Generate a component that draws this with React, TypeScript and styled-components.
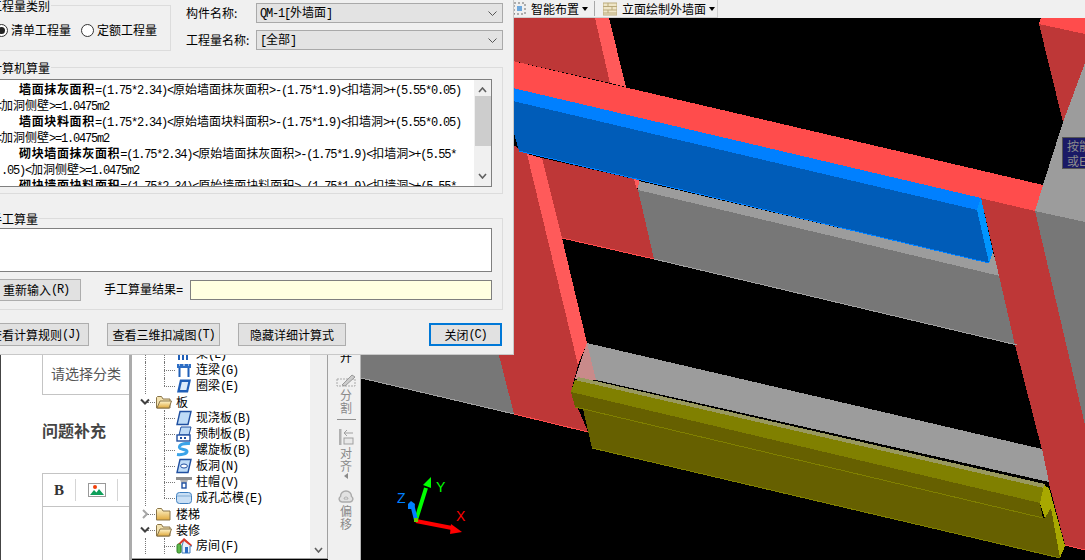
import React from "react";
import styled, { createGlobalStyle } from "styled-components";

const GlobalStyle = createGlobalStyle`
  html, body { margin: 0; padding: 0; background: #000; }
  body { font-family: "Noto Sans CJK SC", "Liberation Sans", sans-serif; font-size: 12px; color: #000; }
  * { box-sizing: border-box; }
`;

// ascii runs get a narrow mono face so they keep the half-width look of the original
const Latin = styled.span`
  font-family: "Liberation Mono", monospace;
  font-size: 12px;
  letter-spacing: -1.2px;
  font-weight: normal;
`;
const Mixed = ({ text }: { text: string }) => (
  <>
    {text.split(/([\x20-\x7e]+)/).map((part, i) =>
      i % 2 ? <Latin key={i}>{part}</Latin> : part
    )}
  </>
);

/* ---------- 3d scene ---------- */
const FACES: { c: string; p: string }[] = [
  { c: "#777777", p: "361,300 495,300 514,414 361,378" },
  { c: "#BE3737", p: "500,18 595,18 610,83 500,58" },
  { c: "#FF5A5A", p: "595,18 609,18 626,87 610,83" },
  { c: "#BE3737", p: "480,125 528,154 578,365 571,392 588,432 514,414 495,340" },
  { c: "#FF5A5A", p: "527,154 542,158 562,238 587,343 578,365" },
  { c: "#BE3737", p: "542,158 634,179 638,190 654,259 562,238" },
  { c: "#FF5A5A", p: "634,179 640,181 637,190" },
  { c: "#9C9C9C", p: "639,181 989,263 993,252 1000,276 638,190" },
  { c: "#777777", p: "638,190 1000,276 1017,345 654,259" },
  { c: "#777777", p: "1035,211 1085,222 1085,425" },
  { c: "#BE3737", p: "981,198 1035,211 1085,425 1085,550 1065,545 1048,480 1042,450 1015,345" },
  { c: "#9C9C9C", p: "1085,63 1085,222 1035,211 1043,185 1063,122" },
  { c: "#BE3737", p: "1039,24 1085,34 1085,63 1063,122" },
  { c: "#FF4C4C", p: "1041,18 1085,18 1085,34 1039,24" },
  { c: "#FF4C4C", p: "500,58 1043,185 1035,211 500,85" },
  { c: "#0080FF", p: "500,85 981,198 977,210 500,98" },
  { c: "#005CB8", p: "500,98 977,210 989,263 519,151 513,130" },
  { c: "#0095FF", p: "981,198 993,252 989,263 977,210" },
  { c: "#9C9C9C", p: "587,343 1042,449 1049,482 596,380" },
  { c: "#C98A8A", p: "587,343 596,380 575,379" },
  { c: "#99995E", p: "578,377 1045,484 1044,489 576,381" },
  { c: "#808000", p: "575,380 1044,488 1040,503 571,392" },
  { c: "#666000", p: "571,392 1040,503 1043,518 575,407" },
  { c: "#666000", p: "583,409 1045,518 1051,505 1060,558 592,448" },
  { c: "#A8A800", p: "1049,488 1065,546 1060,558 1051,508 1045,518 1040,503 1044,485" },
];

const EDGES: { c: string; d: string }[] = [
  { c: "#0080FF", d: "M519 151L989 263" },
  { c: "#A0A0A0", d: "M361 378L514 414" },
  { c: "#FF4C4C", d: "M514 414L588 432" },
  { c: "#FF4C4C", d: "M562 238L654 259" },
  { c: "#A0A0A0", d: "M654 259L1017 345" },
  { c: "#FF4C4C", d: "M1065 545L1085 550" },
  { c: "#808000", d: "M575 407L1043 518" },
  { c: "#808000", d: "M592 448L1060 558" },
];

const AxisLetter = styled.text`
  font-family: "Liberation Sans", sans-serif;
  font-size: 14px;
  font-weight: 400;
`;

const Scene = () => (
  <svg width="724" height="542" viewBox="361 18 724 542" style={{ display: "block" }}>
    <rect x="361" y="18" width="724" height="542" fill="#000" />
    <g shapeRendering="crispEdges">
      {FACES.map((f, i) => (
        <polygon key={i} points={f.p} fill={f.c} />
      ))}
      {EDGES.map((e, i) => (
        <path key={i} d={e.d} stroke={e.c} strokeWidth="1" fill="none" />
      ))}
    </g>
    {/* axes */}
    <path d="M416 520L426 488" stroke="#00FF00" strokeWidth="4" />
    <polygon points="431,477 431,488 423,485" fill="#00FF00" />
    <path d="M416 520L412 504" stroke="#0080FF" strokeWidth="4" />
    <polygon points="411,501 415,504 414,509 408,509 408,504" fill="#0080FF" />
    <path d="M416 521L452 528" stroke="#FF0000" strokeWidth="4" />
    <polygon points="462,532 451,524 450,534" fill="#FF0000" />
    <rect x="414" y="518" width="4" height="4" fill="#66CC00" />
    <AxisLetter x="397" y="503" fill="#0080FF">Z</AxisLetter>
    <AxisLetter x="436" y="492" fill="#00FF00">Y</AxisLetter>
    <AxisLetter x="456" y="521" fill="#FF0000">X</AxisLetter>
  </svg>
);

/* ---------- small drawings ---------- */
const Chevron = ({ open }: { open: boolean }) =>
  open ? (
    <svg width="10" height="8" viewBox="0 0 10 8">
      <path d="M1 1.5L5 5.5L9 1.5" fill="none" stroke="#404040" strokeWidth="2" />
    </svg>
  ) : (
    <svg width="8" height="10" viewBox="0 0 8 10">
      <path d="M2 1L6 5L2 9" fill="none" stroke="#A6A6A6" strokeWidth="2" />
    </svg>
  );

const Folder = ({ open }: { open: boolean }) => (
  <svg width="16" height="14" viewBox="0 0 16 14">
    <defs>
      <linearGradient id="fold" x1="0" y1="0" x2="0" y2="1">
        <stop offset="0" stopColor="#FFF6CF" />
        <stop offset="1" stopColor="#E0A93C" />
      </linearGradient>
    </defs>
    <path d="M0.5 2.5V13H14V4H7L5.5 1.5H1.5Z" fill={open ? "#F4E3B0" : "url(#fold)"} stroke="#8A7548" />
    {open ? <path d="M1 13L4 6H15.5L13 13Z" fill="url(#fold)" stroke="#8A7548" /> : null}
  </svg>
);

const LEAF: Record<string, React.ReactNode> = {
  beam: <path d="M3 1V14M7 1V14M11 1V14" stroke="#1F5FB8" strokeWidth="2" fill="none" />,
  link: (
    <>
      <rect x="1" y="2" width="14" height="4" fill="#2B6CC4" />
      <path d="M3 3H4M7 3H9M12 3H13" stroke="#fff" />
      <path d="M3.5 6V15M12.5 6V15" stroke="#1F5FB8" strokeWidth="2" />
    </>
  ),
  ring: (
    <>
      <path d="M4 1.5H15L12 14.5H1Z" fill="#1F5FB8" />
      <path d="M5.8 4H12.2L10.4 12H4Z" fill="#DCEBFA" />
    </>
  ),
  slab: <path d="M4 1.5H15L12 14.5H1Z" fill="#BFDCF7" stroke="#1F4FA0" strokeWidth="1.4" />,
  precast: (
    <>
      <path d="M5 1H15L13 9H3Z" fill="#BFDCF7" stroke="#1F4FA0" />
      <rect x="1" y="9" width="13" height="6" fill="#fff" stroke="#1F4FA0" strokeWidth="1.4" />
      <path d="M4 11H6V13H4ZM8 11H10V13H8Z" fill="#1F4FA0" />
    </>
  ),
  spiral: (
    <path
      d="M14 1.5C8 1 3 2.5 3.5 5.5C4 8 11 7 11 9.5C11 12 5 13 1 12.5"
      fill="none"
      stroke="#3AA3E8"
      strokeWidth="3"
    />
  ),
  hole: (
    <>
      <path d="M4 1.5H15L12 14.5H1Z" fill="#BFDCF7" stroke="#1F4FA0" strokeWidth="1.4" />
      <ellipse cx="8" cy="8" rx="3.4" ry="2" fill="#fff" stroke="#1F4FA0" />
    </>
  ),
  cap: (
    <>
      <rect x="0" y="3" width="16" height="3" fill="#8E8E8E" />
      <path d="M4 6H12L10.5 9H5.5Z" fill="#B5B5B5" />
      <rect x="6" y="9" width="4" height="5" fill="#fff" stroke="#1F4FA0" strokeWidth="1.4" />
    </>
  ),
  core: (
    <>
      <rect x="0.5" y="2.5" width="15" height="11" rx="3" fill="#C8DFF5" stroke="#3F7FBF" />
      <path d="M1 6H15" stroke="#7FA9D1" />
    </>
  ),
  room: (
    <>
      <path d="M8 1L16 8H14V15H6V8Z" fill="#E9F2FB" stroke="#3F7FBF" />
      <path d="M8 0L16 7L14.5 8L8 3L3.5 7L2 6Z" fill="#D93A2B" />
      <rect x="9" y="9" width="3" height="6" fill="#2B6CC4" />
      <rect x="1" y="6" width="4" height="9" rx="1.5" fill="#5DB84A" stroke="#2F7F25" />
    </>
  ),
};

const LeafIcon = ({ kind }: { kind: string }) => (
  <svg width="16" height="16" viewBox="0 0 16 16">
    {LEAF[kind]}
  </svg>
);

/* ---------- back page, left column ---------- */
const Page = styled.div`
  position: relative;
  width: 1085px;
  height: 560px;
  overflow: hidden;
  display: flex;
  flex-direction: column;
  background: #000;
`;

const TopBar = styled.div`
  flex: 0 0 18px;
  background: #f0f0f0;
  padding-left: 513px;
`;

const TopTools = styled.div`
  width: 205px;
  height: 18px;
  display: flex;
  align-items: center;
  border-right: 1px solid #cfcfcf;
  border-bottom: 1px solid #cfcfcf;
  line-height: 16px;
`;

const TopLabel = styled.span`
  margin-left: 5px;
  white-space: nowrap;
`;

const Caret = styled.i`
  width: 0;
  height: 0;
  margin-left: 3px;
  border: 3px solid transparent;
  border-top: 4px solid #000;
  border-bottom: 0;
`;

const TopSep = styled.i`
  width: 1px;
  height: 15px;
  background: #a8a8a8;
  margin: 0 8px 0 6px;
`;

const Workspace = styled.div`
  flex: 1;
  display: flex;
  min-height: 0;
`;

const WebColumn = styled.div`
  flex: 0 0 132px;
  background: #fff;
  border-left: 1px solid #444;
  border-right: 3px solid #ababab;
  padding: 337px 0 0 41px;
  color: #555;
`;

const CategoryBox = styled.div`
  height: 40px;
  border-left: 1px solid #c4c4c4;
  border-bottom: 1px solid #c4c4c4;
  padding: 8px 0 0 8px;
  font-size: 14px;
  line-height: 20px;
  white-space: nowrap;
`;

const SectionTitle = styled.div`
  margin: 24px 0 32px;
  font-size: 16px;
  font-weight: 700;
  line-height: 22px;
  color: #444;
  white-space: nowrap;
`;

const Editor = styled.div`
  height: 90px;
  border-left: 1px solid #c4c4c4;
  border-top: 1px solid #c4c4c4;
`;

const EditorTools = styled.div`
  height: 33px;
  display: flex;
  align-items: center;
  border-bottom: 1px solid #c4c4c4;
`;

const BoldButton = styled.span`
  width: 32px;
  text-align: center;
  font-family: "Liberation Serif", serif;
  font-size: 15px;
  font-weight: 700;
  color: #333;
`;

const ToolSep = styled.i`
  width: 1px;
  height: 22px;
  background: #d5d5d5;
`;

const PictureSlot = styled.span`
  width: 41px;
  display: flex;
  justify-content: center;
`;

/* ---------- tree ---------- */
const TreePanel = styled.div`
  flex: 0 0 196px;
  height: 541px;
  display: flex;
  background: #fff;
  border-right: 1px solid #a0a0a0;
  border-bottom: 1px solid #a0a0a0;
`;

const TreeList = styled.div`
  flex: 1;
  padding-top: 328px;
  overflow: hidden;
`;

const TreeRow = styled.div<{ $leaf: boolean; $last?: boolean }>`
  position: relative;
  height: 16px;
  display: flex;
  align-items: center;
  padding-left: ${(p) => (p.$leaf ? 44 : 24)}px;
  line-height: 16px;
  white-space: nowrap;
  &::before {
    content: "";
    position: absolute;
    left: ${(p) => (p.$leaf ? 32 : 15)}px;
    top: 8px;
    width: ${(p) => (p.$leaf ? 11 : 8)}px;
    border-top: 1px dotted #777;
  }
  &::after {
    content: "";
    position: absolute;
    left: ${(p) => (p.$leaf ? 32 : 13)}px;
    top: 0;
    height: ${(p) => (p.$last ? 8 : 16)}px;
    border-left: ${(p) => (p.$leaf ? "1px dotted #777" : "none")};
  }
`;

const RailLine = styled.i`
  position: absolute;
  left: 13px;
  top: 0;
  height: 16px;
  border-left: 1px dotted #777;
`;

const Toggle = styled.span`
  position: absolute;
  left: 8px;
  top: 4px;
  width: 10px;
  height: 8px;
  display: flex;
  align-items: center;
  justify-content: center;
`;

const RowLabel = styled.span`
  margin-left: 4px;
`;

const TreeScroll = styled.div`
  flex: 0 0 17px;
  background: #f0f0f0;
  display: flex;
  align-items: flex-end;
  justify-content: center;
  padding-bottom: 5px;
`;

type Row = { label: string; kind?: string; open?: boolean; last?: boolean };

const ROWS: Row[] = [
  { label: "梁(L)", kind: "beam" },
  { label: "连梁(G)", kind: "link" },
  { label: "圈梁(E)", kind: "ring", last: true },
  { label: "板", open: true },
  { label: "现浇板(B)", kind: "slab" },
  { label: "预制板(B)", kind: "precast" },
  { label: "螺旋板(B)", kind: "spiral" },
  { label: "板洞(N)", kind: "hole" },
  { label: "柱帽(V)", kind: "cap" },
  { label: "成孔芯模(E)", kind: "core", last: true },
  { label: "楼梯", open: false },
  { label: "装修", open: true },
  { label: "房间(F)", kind: "room" },
];

/* ---------- vertical tool bar ---------- */
const VBar = styled.div`
  flex: 0 0 33px;
  background: #f0f0f0;
  border-right: 1px solid #b4b4b4;
  display: flex;
  flex-direction: column;
  align-items: center;
  padding: 333px 0 0 4px;
`;

const VLabel = styled.div<{ $active?: boolean }>`
  writing-mode: vertical-rl;
  font-size: 12px;
  line-height: 13px;
  letter-spacing: 1px;
  margin-top: ${(p) => (p.$active ? 0 : 1)}px;
  color: ${(p) => (p.$active ? "#000" : "#8a8a8a")};
`;

const VIcon = styled.svg`
  display: block;
  margin-top: 9px;
`;

const VSep = styled.i`
  width: 19px;
  border-top: 1px solid #909090;
  margin: 4px 0 -1px;
`;

const VArrow = styled.i`
  width: 0;
  height: 0;
  border: 3px solid transparent;
  border-right: 4px solid #8a8a8a;
  border-left: 0;
`;

/* ---------- viewport ---------- */
const Viewport = styled.div`
  flex: 1;
  position: relative;
  overflow: hidden;
`;

const HintBox = styled.div`
  position: absolute;
  left: 701px;
  top: 119px;
  width: 30px;
  height: 32px;
  padding: 0 0 0 4px;
  background: #1a1a66;
  border: 1px solid #555;
  color: #8c8c8c;
  font-size: 12px;
  line-height: 15px;
  white-space: nowrap;
  overflow: hidden;
`;

/* ---------- dialog ---------- */
const Dialog = styled.div`
  position: absolute;
  left: -30px;
  top: 0;
  width: 544px;
  height: 355px;
  padding: 0 10px;
  background: #f0f0f0;
  border-right: 1px solid #c8c8c8;
  border-bottom: 1px solid #c8c8c8;
  line-height: 16px;
`;

const HeadRow = styled.div`
  display: flex;
  height: 51px;
`;

const Group = styled.section<{ $h: number; $w?: number }>`
  position: relative;
  height: ${(p) => p.$h}px;
  width: ${(p) => (p.$w ? `${p.$w}px` : "auto")};
  border: 1px solid #dcdcdc;
`;

const TypeGroup = styled(Group)`
  margin-top: 5px;
`;

const Legend = styled.span`
  position: absolute;
  left: 8px;
  top: -8px;
  padding: 0 1px;
  background: #f0f0f0;
  white-space: nowrap;
`;

const RadioRow = styled.div`
  display: flex;
  align-items: center;
  padding: 16px 0 0 14px;
`;

const Radio = styled.i<{ $on?: boolean }>`
  position: relative;
  flex: 0 0 13px;
  height: 13px;
  margin-right: 3px;
  background: #fff;
  border: 1px solid #333;
  border-radius: 50%;
  &::after {
    content: "";
    display: ${(p) => (p.$on ? "block" : "none")};
    position: absolute;
    left: 2px;
    top: 2px;
    width: 7px;
    height: 7px;
    background: #222;
    border-radius: 50%;
  }
`;

const RadioLabel = styled.span`
  margin-right: 10px;
  white-space: nowrap;
`;

const FieldCol = styled.div`
  margin: 3px 0 0 15px;
  display: flex;
  flex-direction: column;
  gap: 7px;
  flex: 1;
`;

const FieldRow = styled.div`
  display: flex;
  align-items: center;
`;

const FieldLabel = styled.span`
  flex: 0 0 70px;
  white-space: nowrap;
`;

const Select = styled.div`
  flex: 1;
  height: 20px;
  display: flex;
  align-items: center;
  justify-content: space-between;
  padding: 0 5px 0 3px;
  background: #e3e3e3;
  border: 1px solid #a9a9a9;
`;

const CalcGroup = styled(Group)`
  margin-top: 16px;
  padding: 11px 10px 0 11px;
`;

const CalcBox = styled.div`
  height: 108px;
  display: flex;
  background: #fff;
  border: 1px solid #7f7f7f;
`;

const CalcText = styled.div`
  flex: 1;
  overflow: hidden;
  padding: 1px 0 0 2px;
`;

const CalcLine = styled.div<{ $indent?: number }>`
  height: 16px;
  line-height: 16px;
  padding-left: ${(p) => p.$indent ?? 0}px;
  white-space: nowrap;
`;

const CalcName = styled.b`
  font-weight: 700;
  letter-spacing: 0.65px;
`;

const ScrollBar = styled.div`
  flex: 0 0 17px;
  background: #f0f0f0;
  display: flex;
  flex-direction: column;
  align-items: center;
  justify-content: space-between;
  padding: 7px 0;
`;

const ScrollThumb = styled.i`
  width: 16px;
  height: 50px;
  background: #cdcdcd;
  margin: 3px 0 auto;
`;

const ManualGroup = styled(Group)`
  margin-top: 24px;
  padding: 9px 10px 0 10px;
`;

const ManualBox = styled.div`
  height: 44px;
  background: #fff;
  border: 1px solid #7f7f7f;
`;

const ManualRow = styled.div`
  margin-top: 7px;
  display: flex;
  align-items: center;
`;

const Button = styled.div<{ $w: number; $h?: number; $primary?: boolean }>`
  flex: 0 0 ${(p) => p.$w}px;
  height: ${(p) => p.$h ?? 23}px;
  display: flex;
  align-items: center;
  justify-content: center;
  background: #e1e1e1;
  border: ${(p) => (p.$primary ? "2px solid #0078d7" : "1px solid #adadad")};
  white-space: nowrap;
`;

const ResultLabel = styled.span`
  margin: 0 8px 0 23px;
  white-space: nowrap;
`;

const ResultInput = styled.div`
  flex: 1;
  height: 20px;
  background: #ffffe1;
  border: 1px solid #7f7f7f;
`;

const ActionRow = styled.div`
  margin-top: 13px;
  padding: 0 1px;
  display: flex;
  gap: 18px;
`;

const CloseSlot = styled.div`
  margin-left: auto;
  display: flex;
`;

const CALC: { name?: string; text: string; indent: number }[] = [
  { name: "墙面抹灰面积", text: "=(1.75*2.34)<原始墙面抹灰面积>-(1.75*1.9)<扣墙洞>+(5.55*0.05)", indent: 24 },
  { text: "<加洞侧壁>=1.0475m2", indent: 0 },
  { name: "墙面块料面积", text: "=(1.75*2.34)<原始墙面块料面积>-(1.75*1.9)<扣墙洞>+(5.55*0.05)", indent: 24 },
  { text: "<加洞侧壁>=1.0475m2", indent: 0 },
  { name: "砌块墙面抹灰面积", text: "=(1.75*2.34)<原始墙面抹灰面积>-(1.75*1.9)<扣墙洞>+(5.55*", indent: 24 },
  { text: ".05)<加洞侧壁>=1.0475m2", indent: 6 },
  { name: "砌块墙面块料面积", text: "=(1.75*2.34)<原始墙面块料面积>-(1.75*1.9)<扣墙洞>+(5.55*", indent: 24 },
];

const Arrow = ({ up }: { up?: boolean }) => (
  <svg width="9" height="6" viewBox="0 0 9 6">
    <path d={up ? "M1 5L4.5 1L8 5" : "M1 1L4.5 5L8 1"} fill="none" stroke="#606060" strokeWidth="1.6" />
  </svg>
);

const SelectArrow = () => (
  <svg width="9" height="5" viewBox="0 0 9 5">
    <path d="M0.5 0.5L4.5 4.5L8.5 0.5" fill="none" stroke="#555" />
  </svg>
);

export default function App() {
  return (
    <>
      <GlobalStyle />
      <Page>
        <TopBar>
          <TopTools>
            <svg width="13" height="13" viewBox="0 0 13 13">
              <path d="M1 1H12V12H1Z" fill="none" stroke="#6a6a6a" strokeDasharray="2 2" />
              <rect x="4" y="4" width="5" height="5" fill="#6FA8DC" />
            </svg>
            <TopLabel>智能布置</TopLabel>
            <Caret />
            <TopSep />
            <svg width="14" height="14" viewBox="0 0 14 14">
              <rect x="0" y="1" width="14" height="12" fill="#EFE6C8" stroke="#B9A97A" />
              <path d="M0 4.5H14M0 8H14M0 11H14M5 1V4.5M9 4.5V8M5 8V11" stroke="#B9A97A" fill="none" />
            </svg>
            <TopLabel>立面绘制外墙面</TopLabel>
            <Caret />
          </TopTools>
        </TopBar>
        <Workspace>
          <WebColumn>
            <CategoryBox>请选择分类</CategoryBox>
            <SectionTitle>问题补充</SectionTitle>
            <Editor>
              <EditorTools>
                <BoldButton>B</BoldButton>
                <ToolSep />
                <PictureSlot>
                  <svg width="18" height="14" viewBox="0 0 18 14">
                    <rect x="0.5" y="0.5" width="17" height="13" fill="#fff" stroke="#999" />
                    <circle cx="7" cy="4" r="2" fill="#F0400A" />
                    <path d="M2 12L6 7L8.5 9.5L11 6L16 12Z" fill="#0E9F5A" />
                  </svg>
                </PictureSlot>
                <ToolSep />
              </EditorTools>
            </Editor>
          </WebColumn>
          <TreePanel>
            <TreeList>
              {ROWS.map((r) => {
                const leaf = Boolean(r.kind);
                return (
                  <TreeRow key={r.label} $leaf={leaf} $last={r.last}>
                    {leaf ? <RailLine /> : null}
                    {leaf ? (
                      <LeafIcon kind={r.kind as string} />
                    ) : (
                      <>
                        <Toggle>
                          <Chevron open={Boolean(r.open)} />
                        </Toggle>
                        <Folder open={Boolean(r.open)} />
                      </>
                    )}
                    <RowLabel>
                      <Mixed text={r.label} />
                    </RowLabel>
                  </TreeRow>
                );
              })}
            </TreeList>
            <TreeScroll>
              <Arrow />
            </TreeScroll>
          </TreePanel>
          <VBar>
            <VLabel $active>开</VLabel>
            <VIcon width="20" height="15" viewBox="0 0 20 15">
              <path d="M1 6H19V13H1Z" fill="none" stroke="#aaa" strokeDasharray="2 1" />
              <path d="M6 12L16 2L19 4L9 13Z" fill="#ccc" stroke="#999" />
            </VIcon>
            <VLabel>分割</VLabel>
            <VSep />
            <VIcon width="16" height="18" viewBox="0 0 16 18">
              <rect x="1" y="1" width="2.5" height="16" fill="#b0b0b0" />
              <path d="M15 5H6M9 2L6 5L9 8" fill="none" stroke="#a0a0a0" />
              <rect x="6" y="10" width="9" height="6" fill="#e8e8e8" stroke="#a0a0a0" />
            </VIcon>
            <VLabel>对齐</VLabel>
            <VArrow />
            <VIcon width="16" height="16" viewBox="0 0 16 16">
              <path
                d="M4 14A3 3 0 0 1 2.5 8.5A5.5 5.5 0 0 1 13.5 8.5A3 3 0 0 1 12 14Z"
                fill="#e2e2e2"
                stroke="#ababab"
                strokeWidth="1.4"
              />
              <path d="M6 11A2 2 0 0 1 10 11Z" fill="#fff" stroke="#ababab" />
            </VIcon>
            <VLabel>偏移</VLabel>
          </VBar>
          <Viewport>
            <Scene />
            <HintBox>
              按能
              <br />
              或ESC
            </HintBox>
          </Viewport>
        </Workspace>

        <Dialog>
          <HeadRow>
            <TypeGroup $h={46} $w={191}>
              <Legend>工程量类别</Legend>
              <RadioRow>
                <Radio $on />
                <RadioLabel>清单工程量</RadioLabel>
                <Radio />
                <RadioLabel>定额工程量</RadioLabel>
              </RadioRow>
            </TypeGroup>
            <FieldCol>
              <FieldRow>
                <FieldLabel>构件名称:</FieldLabel>
                <Select>
                  <span>
                    <Mixed text="QM-1[外墙面]" />
                  </span>
                  <SelectArrow />
                </Select>
              </FieldRow>
              <FieldRow>
                <FieldLabel>工程量名称:</FieldLabel>
                <Select>
                  <span>
                    <Mixed text="[全部]" />
                  </span>
                  <SelectArrow />
                </Select>
              </FieldRow>
            </FieldCol>
          </HeadRow>
          <CalcGroup $h={127}>
            <Legend>计算机算量</Legend>
            <CalcBox>
              <CalcText>
                {CALC.map((l, i) => (
                  <CalcLine key={i} $indent={l.indent}>
                    {l.name ? <CalcName>{l.name}</CalcName> : null}
                    <Mixed text={l.text} />
                  </CalcLine>
                ))}
              </CalcText>
              <ScrollBar>
                <Arrow up />
                <ScrollThumb />
                <Arrow />
              </ScrollBar>
            </CalcBox>
          </CalcGroup>
          <ManualGroup $h={92}>
            <Legend>手工算量</Legend>
            <ManualBox />
            <ManualRow>
              <Button $w={90} $h={22}>
                <Mixed text="重新输入(R)" />
              </Button>
              <ResultLabel>
                <Mixed text="手工算量结果=" />
              </ResultLabel>
              <ResultInput />
            </ManualRow>
          </ManualGroup>
          <ActionRow>
            <Button $w={108}>
              <Mixed text="查看计算规则(J)" />
            </Button>
            <Button $w={113}>
              <Mixed text="查看三维扣减图(T)" />
            </Button>
            <Button $w={108}>隐藏详细计算式</Button>
            <CloseSlot>
              <Button $w={73} $primary>
                <Mixed text="关闭(C)" />
              </Button>
            </CloseSlot>
          </ActionRow>
        </Dialog>
      </Page>
    </>
  );
}
